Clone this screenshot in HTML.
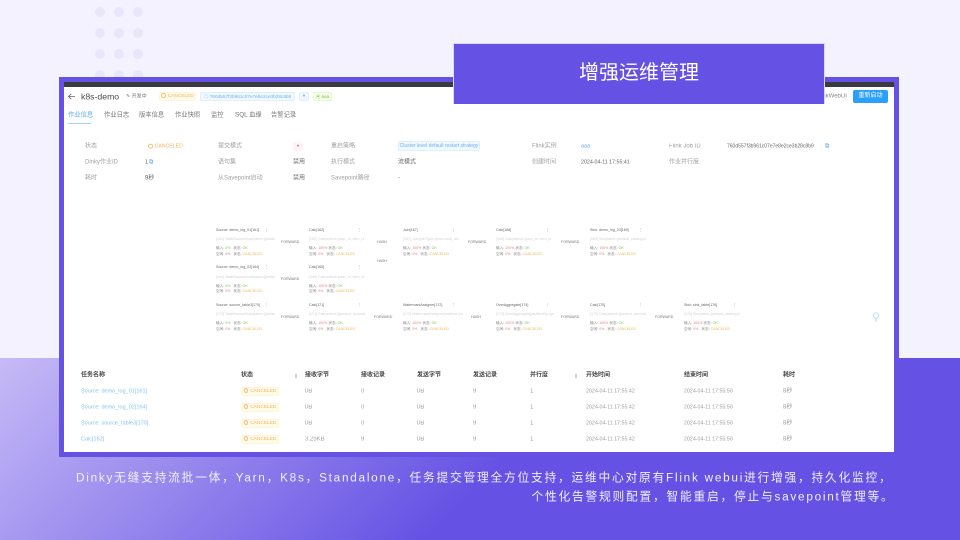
<!DOCTYPE html>
<html lang="zh-CN"><head><meta charset="utf-8"><title>增强运维管理</title>
<style>
html,body{margin:0;padding:0}
body{width:960px;height:540px;overflow:hidden;position:relative;background:#f4f2fe;font-family:"Liberation Sans","Noto Sans CJK SC",sans-serif}
.a,.t,.n,.tag{position:absolute;white-space:nowrap}
.dot{position:absolute;width:10px;height:10px;border-radius:50%;background:#e9e6fc}
#bg{position:absolute;left:0;top:358px;width:960px;height:182px;background:linear-gradient(135deg,#c6baf6 0%,#6552e4 53%,#6552e4 100%)}
#frame{position:absolute;left:59px;top:77px;width:840px;height:380px;background:#6552e4}
#bar{position:absolute;left:64px;top:82px;width:830px;height:5px;background:#3a3b40}
#white{position:absolute;left:64px;top:87px;width:830px;height:365px;background:#fff}
#banner{position:absolute;left:454px;top:44px;width:370px;height:60px;background:#6552e4;color:#fff;font-size:20px;line-height:58px;text-align:center;box-shadow:0 0 0 1px #dcd6fa;clip-path:inset(-1px -1px 0 -1px)}
.cap{position:absolute;color:#f1effd;font-size:11.75px;line-height:18px;letter-spacing:1.75px;white-space:nowrap;transform:translateY(calc(-50% + .5px))}
.t{transform:translateY(calc(-50% + .7px));font-size:6px;line-height:8px;color:#666;filter:blur(.3px)}
.l{color:#a0a0a0}.d{color:#666}.b{color:#444;font-weight:bold}.link{color:#86c1f6}.o{color:#f3b65a}
.tag{box-sizing:border-box;border-radius:2px;font-size:4.8px;text-align:center;filter:blur(.25px)}
.c{background:#fffbe8;border:1px solid #fff5d8;color:#f2b35c}
.bl{background:#f1f9ff;border:1px solid #dcf0ff;color:#6db2f1}
.g{background:#f6ffec;border:1px solid #e6f8d0;color:#7cc448}
.ci{display:inline-block;box-sizing:border-box;width:4.6px;height:4.6px;border:.6px solid #f5c27e;border-radius:50%;margin-right:2px;vertical-align:-.5px}
.tab{font-size:6.3px}
.n{font-size:3.6px;line-height:5px;color:#888;filter:blur(.2px)}
.tt{color:#666}.de{color:#d2d2d2}.r{color:#ea808a}.gr{color:#80d050}.ca{color:#f4b655}.e{color:#777;font-size:3.6px}
.dt{font-size:5.3px}
</style></head><body>
<div class="dot" style="left:95px;top:7px"></div><div class="dot" style="left:114px;top:7px"></div><div class="dot" style="left:133px;top:7px"></div>
<div class="dot" style="left:95px;top:28px"></div><div class="dot" style="left:114px;top:28px"></div><div class="dot" style="left:133px;top:28px"></div>
<div class="dot" style="left:95px;top:49px"></div><div class="dot" style="left:114px;top:49px"></div><div class="dot" style="left:133px;top:49px"></div>
<div class="dot" style="left:95px;top:70px"></div><div class="dot" style="left:114px;top:70px"></div><div class="dot" style="left:133px;top:70px"></div>
<div id="bg"></div>
<div id="frame"></div><div id="bar"></div><div id="white"></div>

<svg class="a" style="left:67px;top:92px" width="9" height="9" viewBox="0 0 9 9"><path d="M8 4.5H1.5M4.2 1.8L1.5 4.5l2.7 2.7" fill="none" stroke="#666" stroke-width=".8"/></svg>
<div class="t" style="left:81px;top:96px;font-size:8.7px;color:#4a4a4a;line-height:12px">k8s-demo</div>
<div class="t" style="left:126px;top:96px;font-size:5px;color:#777">✎ 开发中</div>
<div class="tag c" style="left:159px;top:92px;width:37px;height:9px;line-height:7px"><i class="ci"></i>CANCELED</div>
<div class="tag bl" style="left:200px;top:92px;width:95px;height:9px;line-height:7px;font-size:4.7px">◇ 760d557f3b961c07e7e8e2ce3b28c8b9</div>
<div class="tag bl" style="left:299px;top:92px;width:10px;height:9px;line-height:7px">♦</div>
<div class="tag g" style="left:313px;top:92px;width:19px;height:9px;line-height:7px;font-size:4.5px">▣ aaa</div>
<div class="t" style="left:816px;top:96px;color:#888;font-size:6px">FlinkWebUI</div>
<div class="tag" style="left:853px;top:90px;width:35px;height:13px;line-height:13px;background:#2aa0fb;color:#fff;font-size:6px;border-radius:2px">重新启动</div>

<div class="t tab link" style="left:68px;top:115px;color:#5cabf2">作业信息</div>
<div class="a" style="left:68px;top:122.5px;width:23px;height:1px;background:#a5d5f9"></div>
<div class="t tab" style="left:104px;top:115px;color:#777">作业日志</div>
<div class="t tab" style="left:139px;top:115px;color:#777">版本信息</div>
<div class="t tab" style="left:175px;top:115px;color:#777">作业快照</div>
<div class="t tab" style="left:211px;top:115px;color:#777">监控</div>
<div class="t tab" style="left:235px;top:115px;color:#777">SQL 血缘</div>
<div class="t tab" style="left:271px;top:115px;color:#777">告警记录</div>

<div class="t l" style="left:85px;top:146px">状态</div>
<div class="t o" style="left:148px;top:146px;font-size:5.2px"><i class="ci"></i>CANCELED</div>
<div class="t l" style="left:218px;top:146px">提交模式</div>
<div class="tag" style="left:293px;top:142px;width:10px;height:9px;line-height:9px;background:#fff3f8;color:#ee6aa8">♦</div>
<div class="t l" style="left:331px;top:146px">重启策略</div>
<div class="tag bl" style="left:398px;top:141px;width:82px;height:10px;line-height:8px;font-size:5px">Cluster level default restart strategy</div>
<div class="t l" style="left:532px;top:146px">Flink实例</div>
<div class="t link" style="left:581px;top:146px;font-size:5.5px;color:#5cabf2">aaa</div>
<div class="t l" style="left:669px;top:146px">Flink Job ID</div>
<div class="t d" style="left:727px;top:146px;font-size:5px">760d557f3b961c07e7e8e2ce3b28c8b9</div>
<div class="t link" style="left:825px;top:146px;color:#5cabf2">⧉</div>

<div class="t l" style="left:85px;top:162px">Dinky作业ID</div>
<div class="t d" style="left:145px;top:162px">1</div>
<div class="t link" style="left:149px;top:162px;color:#5cabf2">⧉</div>
<div class="t l" style="left:218px;top:162px">语句集</div>
<div class="t d" style="left:293px;top:162px">禁用</div>
<div class="t l" style="left:331px;top:162px">执行模式</div>
<div class="t d" style="left:398px;top:162px">流模式</div>
<div class="t l" style="left:532px;top:162px">创建时间</div>
<div class="t d" style="left:581px;top:162px;font-size:5.3px">2024-04-11 17:55:41</div>
<div class="t l" style="left:669px;top:162px">作业并行度</div>

<div class="t l" style="left:85px;top:178px">耗时</div>
<div class="t d" style="left:145px;top:178px">9秒</div>
<div class="t l" style="left:218px;top:178px">从Savepoint启动</div>
<div class="t d" style="left:293px;top:178px">禁用</div>
<div class="t l" style="left:331px;top:178px">Savepoint路径</div>
<div class="t d" style="left:398px;top:178px">-</div>

<!-- flow graph row 1 -->
<div class="n tt" style="left:216px;top:228px">Source: demo_log_01[161]</div><div class="n tt" style="left:265px;top:228px">⋮</div>
<div class="n de" style="left:216px;top:237px">[161] TableSourceScan(table=[[defau</div>
<div class="n" style="left:216px;top:246px">输入: <span class="gr">0%</span> &nbsp; 状态: <span class="gr">OK</span></div>
<div class="n" style="left:216px;top:252px">空闲: <span class="r">0%</span> &nbsp; 状态: <span class="ca">CANCELED</span></div>
<div class="n e" style="left:281px;top:240px">FORWARD</div>

<div class="n tt" style="left:309px;top:228px">Calc[162]</div><div class="n tt" style="left:358px;top:228px">⋮</div>
<div class="n de" style="left:309px;top:237px">[162] Calc(select=[user_id, item_id</div>
<div class="n" style="left:309px;top:246px">输入: <span class="r">100%</span> 状态: <span class="gr">OK</span></div>
<div class="n" style="left:309px;top:252px">空闲: <span class="r">0%</span> &nbsp; 状态: <span class="ca">CANCELED</span></div>
<div class="n e" style="left:377px;top:240px">HASH</div>

<div class="n tt" style="left:403px;top:228px">Join[167]</div><div class="n tt" style="left:452px;top:228px">⋮</div>
<div class="n de" style="left:403px;top:237px">[167] Join(joinType=[InnerJoin], wh</div>
<div class="n" style="left:403px;top:246px">输入: <span class="r">100%</span> 状态: <span class="gr">OK</span></div>
<div class="n" style="left:403px;top:252px">空闲: <span class="r">0%</span> &nbsp; 状态: <span class="ca">CANCELED</span></div>
<div class="n e" style="left:468px;top:240px">FORWARD</div>

<div class="n tt" style="left:496px;top:228px">Calc[168]</div><div class="n tt" style="left:546px;top:228px">⋮</div>
<div class="n de" style="left:496px;top:237px">[168] Calc(select=[user_id, item_id</div>
<div class="n" style="left:496px;top:246px">输入: <span class="r">100%</span> 状态: <span class="gr">OK</span></div>
<div class="n" style="left:496px;top:252px">空闲: <span class="r">0%</span> &nbsp; 状态: <span class="ca">CANCELED</span></div>
<div class="n e" style="left:561px;top:240px">FORWARD</div>

<div class="n tt" style="left:590px;top:228px">Sink: demo_log_03[169]</div><div class="n tt" style="left:639px;top:228px">⋮</div>
<div class="n de" style="left:590px;top:237px">[169] Sink(table=[default_catalog.d</div>
<div class="n" style="left:590px;top:246px">输入: <span class="r">100%</span> 状态: <span class="gr">OK</span></div>
<div class="n" style="left:590px;top:252px">空闲: <span class="r">0%</span> &nbsp; 状态: <span class="ca">CANCELED</span></div>

<!-- row 2 -->
<div class="n tt" style="left:216px;top:265px">Source: demo_log_02[164]</div><div class="n tt" style="left:265px;top:265px">⋮</div>
<div class="n de" style="left:216px;top:275px">[164] TableSourceScan(table=[[defau</div>
<div class="n" style="left:216px;top:284px">输入: <span class="gr">0%</span> &nbsp; 状态: <span class="gr">OK</span></div>
<div class="n" style="left:216px;top:289px">空闲: <span class="r">0%</span> &nbsp; 状态: <span class="ca">CANCELED</span></div>
<div class="n e" style="left:281px;top:277px">FORWARD</div>
<div class="n tt" style="left:309px;top:265px">Calc[165]</div><div class="n tt" style="left:358px;top:265px">⋮</div>
<div class="n de" style="left:309px;top:275px">[165] Calc(select=[user_id, item_id</div>
<div class="n" style="left:309px;top:284px">输入: <span class="r">100%</span> 状态: <span class="gr">OK</span></div>
<div class="n" style="left:309px;top:289px">空闲: <span class="r">0%</span> &nbsp; 状态: <span class="ca">CANCELED</span></div>
<div class="n e" style="left:377px;top:259px">HASH</div>

<!-- row 3 -->
<div class="n tt" style="left:216px;top:303px">Source: source_table3[170]</div><div class="n tt" style="left:265px;top:303px">⋮</div>
<div class="n de" style="left:216px;top:312px">[170] TableSourceScan(table=[[defau</div>
<div class="n" style="left:216px;top:321px">输入: <span class="gr">0%</span> &nbsp; 状态: <span class="gr">OK</span></div>
<div class="n" style="left:216px;top:327px">空闲: <span class="r">0%</span> &nbsp; 状态: <span class="ca">CANCELED</span></div>
<div class="n e" style="left:281px;top:315px">FORWARD</div>
<div class="n tt" style="left:309px;top:303px">Calc[171]</div><div class="n tt" style="left:358px;top:303px">⋮</div>
<div class="n de" style="left:309px;top:312px">[171] Calc(select=[product, amount,</div>
<div class="n" style="left:309px;top:321px">输入: <span class="r">100%</span> 状态: <span class="gr">OK</span></div>
<div class="n" style="left:309px;top:327px">空闲: <span class="r">0%</span> &nbsp; 状态: <span class="ca">CANCELED</span></div>
<div class="n e" style="left:374px;top:315px">FORWARD</div>
<div class="n tt" style="left:403px;top:303px">WatermarkAssigner[172]</div><div class="n tt" style="left:452px;top:303px">⋮</div>
<div class="n de" style="left:403px;top:312px">[172] WatermarkAssigner(rowtime=[ts</div>
<div class="n" style="left:403px;top:321px">输入: <span class="r">100%</span> 状态: <span class="gr">OK</span></div>
<div class="n" style="left:403px;top:327px">空闲: <span class="r">0%</span> &nbsp; 状态: <span class="ca">CANCELED</span></div>
<div class="n e" style="left:471px;top:315px">HASH</div>
<div class="n tt" style="left:496px;top:303px">OverAggregate[174]</div><div class="n tt" style="left:546px;top:303px">⋮</div>
<div class="n de" style="left:496px;top:312px">[174] OverAggregate(partitionBy=[pr</div>
<div class="n" style="left:496px;top:321px">输入: <span class="r">100%</span> 状态: <span class="gr">OK</span></div>
<div class="n" style="left:496px;top:327px">空闲: <span class="r">0%</span> &nbsp; 状态: <span class="ca">CANCELED</span></div>
<div class="n e" style="left:561px;top:315px">FORWARD</div>
<div class="n tt" style="left:590px;top:303px">Calc[175]</div><div class="n tt" style="left:639px;top:303px">⋮</div>
<div class="n de" style="left:590px;top:312px">[175] Calc(select=[product, amount,</div>
<div class="n" style="left:590px;top:321px">输入: <span class="r">100%</span> 状态: <span class="gr">OK</span></div>
<div class="n" style="left:590px;top:327px">空闲: <span class="r">0%</span> &nbsp; 状态: <span class="ca">CANCELED</span></div>
<div class="n e" style="left:655px;top:315px">FORWARD</div>
<div class="n tt" style="left:684px;top:303px">Sink: sink_table[176]</div><div class="n tt" style="left:733px;top:303px">⋮</div>
<div class="n de" style="left:684px;top:312px">[176] Sink(table=[default_catalog.d</div>
<div class="n" style="left:684px;top:321px">输入: <span class="r">100%</span> 状态: <span class="gr">OK</span></div>
<div class="n" style="left:684px;top:327px">空闲: <span class="r">0%</span> &nbsp; 状态: <span class="ca">CANCELED</span></div>

<svg class="a" style="left:872px;top:312px" width="8" height="11" viewBox="0 0 8 11"><circle cx="4" cy="3.4" r="2.6" fill="none" stroke="#b5e6fb" stroke-width="1"/><path d="M4 6v4" stroke="#a5e0fa" stroke-width="1"/></svg>

<!-- table -->
<div class="t b" style="left:81px;top:375px">任务名称</div>
<div class="t b" style="left:241px;top:375px">状态</div>
<div class="t l" style="left:295px;top:375px;font-size:4px;line-height:3px;white-space:normal;width:4px">▴<br>▾</div>
<div class="t b" style="left:305px;top:375px">接收字节</div>
<div class="t b" style="left:361px;top:375px">接收记录</div>
<div class="t b" style="left:417px;top:375px">发送字节</div>
<div class="t b" style="left:473px;top:375px">发送记录</div>
<div class="t b" style="left:530px;top:375px">并行度</div>
<div class="t l" style="left:575px;top:375px;font-size:4px;line-height:3px;white-space:normal;width:4px">▴<br>▾</div>
<div class="t b" style="left:586px;top:375px">开始时间</div>
<div class="t b" style="left:684px;top:375px">结束时间</div>
<div class="t b" style="left:783px;top:375px">耗时</div>

<div class="t link" style="left:81px;top:391px;font-size:5.5px">Source: demo_log_01[161]</div>
<div class="tag c" style="left:241px;top:387px;width:38px;height:9px;line-height:7px"><i class="ci"></i>CANCELED</div>
<div class="t l" style="left:305px;top:391px">0B</div><div class="t l" style="left:361px;top:391px">0</div><div class="t l" style="left:417px;top:391px">0B</div><div class="t l" style="left:473px;top:391px">9</div><div class="t l" style="left:530px;top:391px">1</div>
<div class="t l dt" style="left:586px;top:391px">2024-04-11 17:55:42</div><div class="t l dt" style="left:684px;top:391px">2024-04-11 17:55:50</div><div class="t l" style="left:783px;top:391px">8秒</div>

<div class="t link" style="left:81px;top:407px;font-size:5.5px">Source: demo_log_02[164]</div>
<div class="tag c" style="left:241px;top:403px;width:38px;height:9px;line-height:7px"><i class="ci"></i>CANCELED</div>
<div class="t l" style="left:305px;top:407px">0B</div><div class="t l" style="left:361px;top:407px">0</div><div class="t l" style="left:417px;top:407px">0B</div><div class="t l" style="left:473px;top:407px">9</div><div class="t l" style="left:530px;top:407px">1</div>
<div class="t l dt" style="left:586px;top:407px">2024-04-11 17:55:42</div><div class="t l dt" style="left:684px;top:407px">2024-04-11 17:55:50</div><div class="t l" style="left:783px;top:407px">8秒</div>

<div class="t link" style="left:81px;top:423px;font-size:5.5px">Source: source_table3[170]</div>
<div class="tag c" style="left:241px;top:419px;width:38px;height:9px;line-height:7px"><i class="ci"></i>CANCELED</div>
<div class="t l" style="left:305px;top:423px">0B</div><div class="t l" style="left:361px;top:423px">0</div><div class="t l" style="left:417px;top:423px">0B</div><div class="t l" style="left:473px;top:423px">9</div><div class="t l" style="left:530px;top:423px">1</div>
<div class="t l dt" style="left:586px;top:423px">2024-04-11 17:55:42</div><div class="t l dt" style="left:684px;top:423px">2024-04-11 17:55:50</div><div class="t l" style="left:783px;top:423px">8秒</div>

<div class="t link" style="left:81px;top:439px;font-size:5.5px">Calc[162]</div>
<div class="tag c" style="left:241px;top:435px;width:38px;height:9px;line-height:7px"><i class="ci"></i>CANCELED</div>
<div class="t l" style="left:305px;top:439px">3.25KB</div><div class="t l" style="left:361px;top:439px">9</div><div class="t l" style="left:417px;top:439px">0B</div><div class="t l" style="left:473px;top:439px">9</div><div class="t l" style="left:530px;top:439px">1</div>
<div class="t l dt" style="left:586px;top:439px">2024-04-11 17:55:42</div><div class="t l dt" style="left:684px;top:439px">2024-04-11 17:55:50</div><div class="t l" style="left:783px;top:439px">8秒</div>

<div id="banner">增强运维管理</div>
<div class="cap" style="left:76px;top:478px">Dinky无缝支持流批一体，Yarn，K8s，Standalone，任务提交管理全方位支持，运维中心对原有Flink webui进行增强，持久化监控，</div>
<div class="cap" style="left:531.5px;top:496.5px">个性化告警规则配置，智能重启，停止与savepoint管理等。</div>
</body></html>
